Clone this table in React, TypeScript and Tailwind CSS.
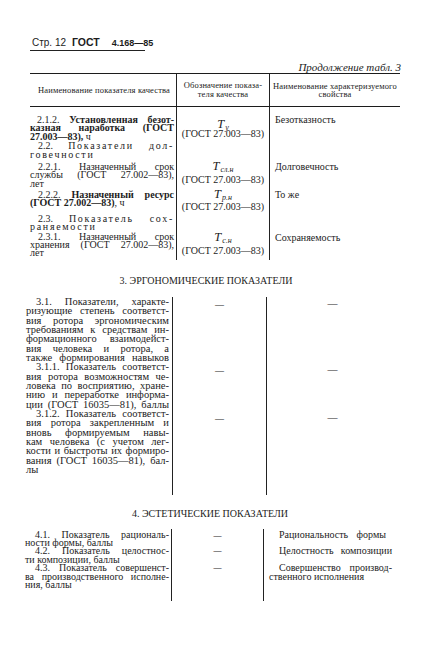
import React from 'react'

const J = 'text-justify [text-align-last:justify]'
const t8 = 'h-[8.4px] leading-[8.4px]'
const t9 = 'h-[9.35px] leading-[9.35px]'
const t4 = 'h-[8.35px] leading-[8.35px]'
const sp = 'tracking-[0.17em]'

function Sym({ sub }: { sub: string }) {
  return (
    <div className="h-[10px] leading-[10px] text-center">
      <span className="italic text-[12.5px]">T</span>
      <span className="italic text-[8px] relative top-[2px] ml-[1px]">{sub}</span>
    </div>
  )
}

function Gost({ c = '' }: { c?: string }) {
  return <div className={`h-[10px] leading-[10px] text-center text-[10px] ${c}`}>(ГОСТ 27.003—83)</div>
}

export default function App() {
  return (
    <div className="w-[423px] h-[658px] overflow-hidden bg-white text-[#1c1c1c] font-['Liberation_Serif',serif]">
      {/* page head */}
      <div className="pt-[36px] pl-[30px]">
        <div className="flex items-baseline whitespace-nowrap w-[115px] h-[15px] leading-[12px] pb-[2px] border-b border-[#222] font-['Liberation_Sans',sans-serif] text-[10px]">
          <span className="ml-[2px]">Стр. 12</span>
          <span className="ml-[6px] font-bold text-[10.5px]">ГОСТ</span>
          <span className="ml-[12px] font-bold text-[9px]">4.168—85</span>
        </div>
      </div>
      <div className="mt-[10px] h-[12px] leading-[12px] pr-[22px] text-right italic text-[11px]">Продолжение табл. 3</div>

      {/* table head */}
      <div className="ml-[30px] w-[370px] border-t border-b border-[#1c1c1c] grid grid-cols-[146px_93px_1fr] h-[34px] text-[8.5px] tracking-[0.15px]">
        <div className="flex items-center justify-center pl-[2px]">Наименование показателя качества</div>
        <div className="border-l border-[#222] flex flex-col justify-center items-center leading-[9px]">
          <div>Обозначение показа-</div>
          <div>теля качества</div>
        </div>
        <div className="border-l border-[#222] flex flex-col justify-center items-center leading-[8px] pb-[1px]">
          <div>Наименование характеризуемого</div>
          <div>свойства</div>
        </div>
      </div>

      {/* table body, section 2 */}
      <div className="ml-[30px] w-[370px] grid grid-cols-[146px_93px_1fr] h-[153px] text-[10px]">
        <div className="flex flex-col pr-[2px]">
          <div className={`${t8} ${J} pl-[7px] mt-[8.8px]`}>2.1.2. <b>Установленная безот-</b></div>
          <div className={`${t8} ${J}`}><b>казная наработка (ГОСТ</b></div>
          <div className={t8}><b>27.003—83),</b> ч</div>
          <div className={`${t8} ${J} pl-[8px] mt-[1.3px]`}>2.2. <span className={sp}>Показатели</span> <span className={sp}>дол-</span></div>
          <div className={`${t8} ${sp}`}>говечности</div>
          <div className={`${t8} ${J} pl-[8px] mt-[3.7px]`}>2.2.1. Назначенный срок</div>
          <div className={`${t8} ${J}`}>службы (ГОСТ 27.002—83),</div>
          <div className={t8}>лет</div>
          <div className={`${t8} ${J} pl-[8px] mt-[2.8px]`}>2.2.2. <b>Назначенный ресурс</b></div>
          <div className={t8}><b>(ГОСТ 27.002—83)</b>, ч</div>
          <div className={`${t8} ${J} pl-[8px] mt-[7.2px]`}>2.3. <span className={sp}>Показатель</span> <span className={sp}>сох-</span></div>
          <div className={`${t8} ${sp}`}>раняемости</div>
          <div className={`${t8} ${J} pl-[8px] mt-[1.2px]`}>2.3.1. Назначенный срок</div>
          <div className={`${t8} ${J}`}>хранения (ГОСТ 27.002—83),</div>
          <div className={t8}>лет</div>
        </div>
        <div className="border-l border-[#222] flex flex-col">
          <div className="mt-[12px]"><Sym sub="у" /></div>
          <Gost />
          <div className="mt-[22px]"><Sym sub="сл.н" /></div>
          <Gost c="mt-[4px]" />
          <div className="mt-[4px]"><Sym sub="р.н" /></div>
          <Gost c="mt-[3px]" />
          <div className="mt-[20px]"><Sym sub="с.н" /></div>
          <Gost c="mt-[3.5px]" />
        </div>
        <div className="border-l border-[#222] flex flex-col pl-[5px]">
          <div className="h-[10px] leading-[10px] mt-[8px]">Безотказность</div>
          <div className="h-[10px] leading-[10px] mt-[37px]">Долговечность</div>
          <div className="h-[10px] leading-[10px] mt-[18px]">То же</div>
          <div className="h-[10px] leading-[10px] mt-[32.5px]">Сохраняемость</div>
        </div>
      </div>

      {/* section 3 */}
      <div className="mt-[14.7px] h-[12px] leading-[12px] pr-[11px] text-center text-[10px]">3. ЭРГОНОМИЧЕСКИЕ ПОКАЗАТЕЛИ</div>
      <div className="mt-[10.3px] ml-[26px] w-[374px] grid grid-cols-[146px_94px_1fr] h-[198px]">
        <div className="flex flex-col pr-[3px] text-[10.5px]">
          <div className={`${t9} ${J} pl-[10px]`}>3.1. Показатели, характе-</div>
          <div className={`${t9} ${J}`}>ризующие степень соответст-</div>
          <div className={`${t9} ${J}`}>вия ротора эргономическим</div>
          <div className={`${t9} ${J}`}>требованиям к средствам ин-</div>
          <div className={`${t9} ${J}`}>формационного взаимодейст-</div>
          <div className={`${t9} ${J}`}>вия человека и ротора, а</div>
          <div className={`${t9} ${J}`}>также формирования навыков</div>
          <div className={`${t9} ${J} pl-[10px]`}>3.1.1. Показатель соответст-</div>
          <div className={`${t9} ${J}`}>вия ротора возможностям че-</div>
          <div className={`${t9} ${J}`}>ловека по восприятию, хране-</div>
          <div className={`${t9} ${J}`}>нию и переработке информа-</div>
          <div className={`${t9} ${J}`}>ции (ГОСТ 16035—81), баллы</div>
          <div className={`${t9} ${J} pl-[10px]`}>3.1.2. Показатель соответст-</div>
          <div className={`${t9} ${J}`}>вия ротора закрепленным и</div>
          <div className={`${t9} ${J}`}>вновь формируемым навы-</div>
          <div className={`${t9} ${J}`}>кам человека (с учетом лег-</div>
          <div className={`${t9} ${J}`}>кости и быстроты их формиро-</div>
          <div className={`${t9} ${J}`}>вания (ГОСТ 16035—81), бал-</div>
          <div className={t9}>лы</div>
        </div>
        <div className="border-l border-[#222] flex flex-col text-center text-[9px]">
          <div className="h-[10px] leading-[10px] mt-[2px]">—</div>
          <div className="h-[10px] leading-[10px] mt-[56px]">—</div>
          <div className="h-[10px] leading-[10px] mt-[38.5px]">—</div>
        </div>
        <div className="border-l border-[#222] flex flex-col text-center text-[10px] pr-[2px]">
          <div className="h-[10px] leading-[10px] mt-[2px]">—</div>
          <div className="h-[10px] leading-[10px] mt-[56px]">—</div>
          <div className="h-[10px] leading-[10px] mt-[38.5px]">—</div>
        </div>
      </div>

      {/* section 4 */}
      <div className="mt-[13px] h-[12px] leading-[12px] pr-[3px] text-center text-[10px]">4. ЭСТЕТИЧЕСКИЕ ПОКАЗАТЕЛИ</div>
      <div className="mt-[9px] ml-[25px] w-[375px] grid grid-cols-[146px_92px_1fr] h-[72px] text-[10px]">
        <div className="flex flex-col pr-[2px] pt-[1.8px]">
          <div className={`${t4} ${J} pl-[10px]`}>4.1. Показатель рациональ-</div>
          <div className={t4}>ности формы, баллы</div>
          <div className={`${t4} ${J} pl-[10px]`}>4.2. Показатель целостнос-</div>
          <div className={t4}>ти композиции, баллы</div>
          <div className={`${t4} ${J} pl-[10px]`}>4.3. Показатель совершенст-</div>
          <div className={`${t4} ${J}`}>ва производственного исполне-</div>
          <div className={t4}>ния, баллы</div>
        </div>
        <div className="border-l border-[#222] flex flex-col text-center text-[8px]">
          <div className="h-[10px] leading-[10px] mt-[2px]">—</div>
          <div className="h-[10px] leading-[10px] mt-[5px]">—</div>
          <div className="h-[10px] leading-[10px] mt-[7px]">—</div>
        </div>
        <div className="border-l border-[#222] flex flex-col pl-[5px] pr-[8px] pt-[1.8px]">
          <div className={`${t4} ${J} pl-[10px] pr-[6px]`}>Рациональность формы</div>
          <div className={t4}></div>
          <div className={`${t4} ${J} pl-[10px]`}>Целостность композиции</div>
          <div className={t4}></div>
          <div className={`${t4} ${J} pl-[10px]`}>Совершенство производ-</div>
          <div className={t4}>ственного исполнения</div>
        </div>
      </div>
    </div>
  )
}
